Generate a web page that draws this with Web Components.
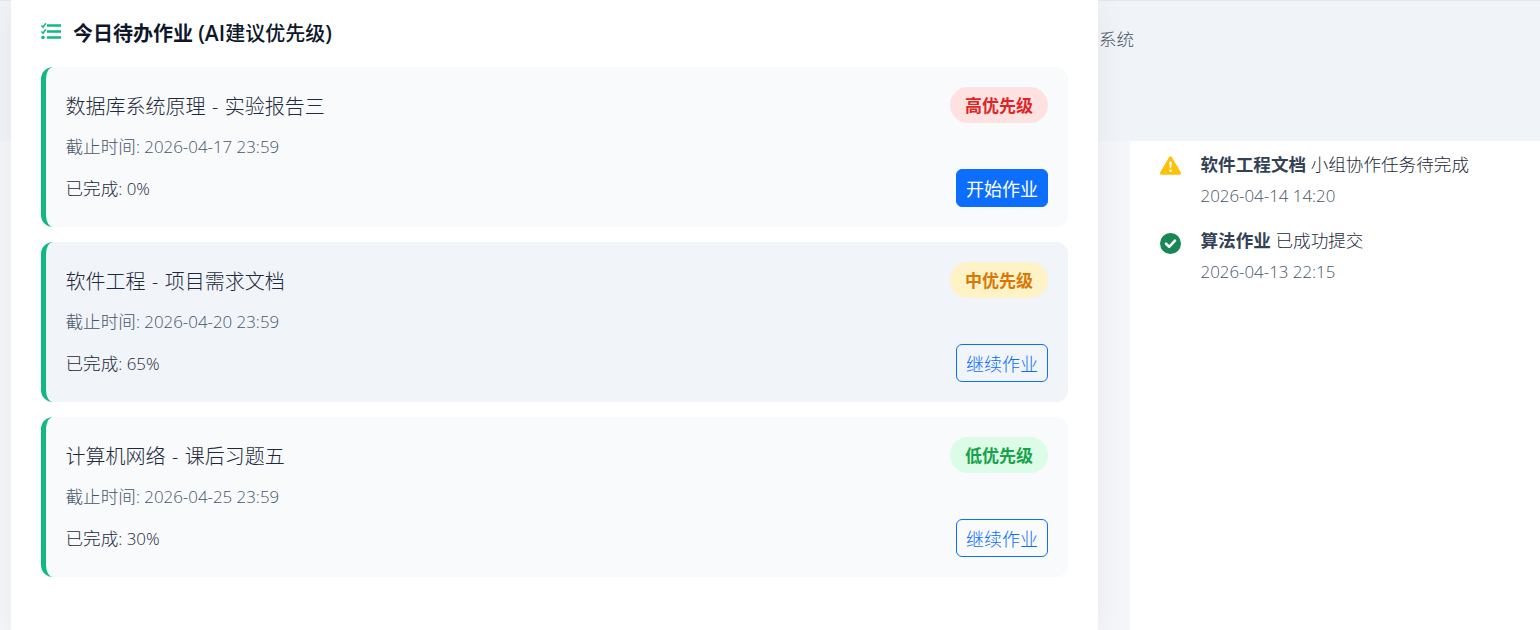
<!DOCTYPE html>
<html lang="zh"><head><meta charset="utf-8"><title>今日待办作业</title>
<style>
html,body{margin:0;padding:0;height:100%;overflow:hidden}
body{font-family:"Open Sans","Noto Sans CJK SC",sans-serif;background:#f5f6f9}
.l{font-size:1.05em;font-weight:600}
</style></head><body>
<dash-page>
  <top-band slot="top">系统</top-band>
  <todo-panel slot="main">
    <span slot="heading"><b>今日待办作业</b> <span class="l">(AI</span>建议优先级<span class="l">)</span></span>
    <task-card level="high" name="数据库系统原理 - 实验报告三" due="截止时间: 2026-04-17 23:59" progress="已完成: 0%" action="开始作业" primary></task-card>
    <task-card level="mid" name="软件工程 - 项目需求文档" due="截止时间: 2026-04-20 23:59" progress="已完成: 65%" action="继续作业" tinted></task-card>
    <task-card level="low" name="计算机网络 - 课后习题五" due="截止时间: 2026-04-25 23:59" progress="已完成: 30%" action="继续作业"></task-card>
  </todo-panel>
  <side-panel slot="side">
    <notice-item kind="warn" time="2026-04-14 14:20"><b>软件工程文档</b> 小组协作任务待完成</notice-item>
    <notice-item kind="ok" time="2026-04-13 22:15"><b>算法作业</b> 已成功提交</notice-item>
  </side-panel>
</dash-page>
<script>
function esc(s){return s.replace(/[&<>]/g,c=>({'&':'&amp;','<':'&lt;','>':'&gt;'}[c]))}
function mix(s){return esc(s).replace(/[\x20-\x7e]+/g,m=>'<span style="font-size:.96em">'+m+'</span>')}
function def(name, html, extra){
  customElements.define(name, class extends HTMLElement{
    connectedCallback(){
      if(this.shadowRoot) return;
      const r=this.attachShadow({mode:'open'});
      r.innerHTML=html;
      if(extra) extra(this,r);
    }
  });
}
def('dash-page',`<style>
:host{display:grid;grid-template-columns:11px 1087px 32px 1fr;grid-template-rows:141px 489px;height:630px;overflow:hidden}
.top{grid-column:1/-1;grid-row:1;display:block}
.main{grid-column:2;grid-row:1/3;display:block;min-width:0;position:relative;z-index:1}
.side{grid-column:4;grid-row:2;display:block;min-width:0}
::slotted(*){height:100%}
</style>
<div class="top"><slot name="top"></slot></div>
<div class="main"><slot name="main"></slot></div>
<div class="side"><slot name="side"></slot></div>`);
def('top-band',`<style>
:host{display:block;box-sizing:border-box;background:#f0f4f9;border-top:1px solid #e2e8f0;padding:25px 0 0 1099px;font-size:17.6px;line-height:27px;font-weight:300;color:#4b5563}
</style><slot></slot>`);
def('todo-panel',`<style>
:host{display:block;box-sizing:border-box;background:#fff;padding:20px 30px 0;box-shadow:0 4px 30px rgba(15,23,42,.06)}
h2{margin:0 0 19px;display:flex;align-items:center;gap:12px;height:28px;font-size:20px;line-height:26px;font-weight:500;color:#0f172a}
h2 div{padding-bottom:2px}
svg{width:20px;height:20px;flex:none;margin-bottom:4px}
.list{display:flex;flex-direction:column;gap:15px;width:1027px}
</style>
<h2><svg viewBox="0 0 20 20" fill="none" stroke="#10b981"><path d="M6 3.5H20M6 9.5H20M6 15.5H20" stroke-width="2.6"/><path d="M.4 3.4 2 5.2 4.8 1.2M.4 9.4 2 11.2 4.8 7.2" stroke-width="1.5"/><circle cx="2" cy="15.5" r="1.8" fill="#10b981" stroke="none"/></svg><div><slot name="heading"></slot></div></h2>
<div class="list"><slot></slot></div>`);
def('task-card',`<style>
:host{display:block;box-sizing:border-box;height:160px;padding:20px 20px 20px 19.5px;border-left:5px solid #10b981;border-radius:12px;background:#f8fafc;color:#1e293b}
:host([tinted]){background:#f1f4f9}
.row{display:flex;justify-content:space-between;align-items:center;height:36px}
.row+.due+.row{height:38px}
.name{font-size:20px;line-height:33px;padding-top:3px;font-weight:300;word-spacing:1.5px}
.badge{box-sizing:border-box;height:36px;width:98px;padding-bottom:2px;border-radius:18px;display:flex;align-items:center;justify-content:center;font-size:17px;font-weight:700}
.high{background:#fee2e2;color:#dc2626}.mid{background:#fef3c7;color:#d97706}.low{background:#dcfce7;color:#16a34a}
.due{margin:11px 0 11px;height:24px;font-size:17.6px;line-height:24px;font-weight:300;color:#475569}
.prog{font-size:17.6px;line-height:24px;font-weight:300}
.btn{box-sizing:border-box;width:92px;height:38px;border:1px solid #0d6efd;border-radius:6px;color:#0d6efd;display:flex;align-items:center;justify-content:center;font-size:18px;font-weight:300}
.btn.primary{background:#0d6efd;color:#fff;font-weight:400}
</style>
<div class="row"><span class="name"></span><span class="badge"></span></div>
<div class="due"></div>
<div class="row"><span class="prog"></span><span class="btn"></span></div>`,(h,r)=>{
  const q=s=>r.querySelector(s);
  q('.name').innerHTML=mix(h.getAttribute('name'));
  q('.due').innerHTML=mix(h.getAttribute('due'));
  q('.prog').innerHTML=mix(h.getAttribute('progress'));
  q('.btn').textContent=h.getAttribute('action');
  if(h.hasAttribute('primary')) q('.btn').classList.add('primary');
  const l=h.getAttribute('level');
  q('.badge').classList.add(l);
  q('.badge').textContent={high:'高优先级',mid:'中优先级',low:'低优先级'}[l];
});
def('side-panel',`<style>
:host{display:flex;flex-direction:column;gap:18px;box-sizing:border-box;background:#fff;padding:9px 30px 0}
</style><slot></slot>`);
def('notice-item',`<style>
:host{display:flex;gap:19.5px;color:#1e293b}
svg{width:21px;height:21px;flex:none;margin-top:5px;display:block}
:host([kind=ok]) svg{margin-top:7px}
.t{font-size:17.6px;line-height:28px;font-weight:300}
.d{font-size:17.6px;line-height:24px;margin-top:5px;font-weight:300;color:#475569}
::slotted(b){font-weight:700;color:#334155}
</style>
<span class="i"></span><div><div class="t"><slot></slot></div><div class="d"></div></div>`,(h,r)=>{
  r.querySelector('.d').innerHTML=mix(h.getAttribute('time'));
  r.querySelector('.i').innerHTML=h.getAttribute('kind')==='warn'
   ?'<svg viewBox="0 0 16 16" fill="#ffc107"><path d="M8.982 1.566a1.13 1.13 0 0 0-1.96 0L.165 13.233c-.457.778.091 1.767.98 1.767h13.713c.889 0 1.438-.99.98-1.767L8.982 1.566zM8 5c.535 0 .954.462.9.995l-.35 3.507a.552.552 0 0 1-1.1 0L7.1 5.995A.905.905 0 0 1 8 5zm.002 6a1 1 0 1 1 0 2 1 1 0 0 1 0-2z"/></svg>'
   :'<svg viewBox="0 0 16 16"><circle cx="8" cy="8" r="8" fill="#198754"/><path d="M4.6 8.2 7 10.5 11.4 5.8" fill="none" stroke="#fff" stroke-width="2" stroke-linecap="round" stroke-linejoin="round"/></svg>';
});
</script>
</body></html>
